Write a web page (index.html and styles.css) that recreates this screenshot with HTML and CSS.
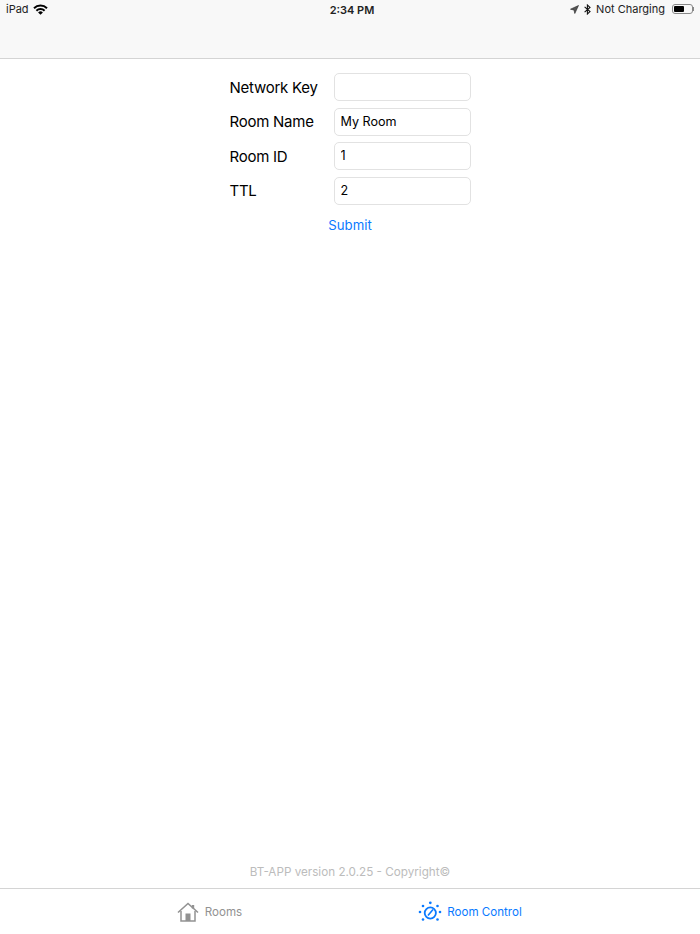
FILE: index.html
```html
<!DOCTYPE html>
<html lang="en">
<head>
  <meta charset="UTF-8">
  <title>Room Control</title>
  <link rel="stylesheet" href="styles.css">
</head>
<body>
  <div class="screen">
    <div class="topbar">
      <div class="status">
        <div class="status-left">
          <span>iPad</span>
          <svg class="wifi" width="15" height="11" viewBox="0 0 15 11">
            <path d="M0.3 3.6A10.2 10.2 0 0 1 14.7 3.6L13.3 5A8.2 8.2 0 0 0 1.7 5Z" fill="#000"/>
            <path d="M2.7 6A6.8 6.8 0 0 1 12.3 6L10.9 7.4A4.8 4.8 0 0 0 4.1 7.4Z" fill="#000"/>
            <path d="M5.1 8.4A3.4 3.4 0 0 1 9.9 8.4L7.5 10.8Z" fill="#000"/>
          </svg>
        </div>
        <div class="status-time">2:34 PM</div>
        <div class="status-right">
          <svg width="9" height="9" viewBox="0 0 9 9"><path d="M8.5 0.5L0.5 4.2L4 5L4.8 8.5Z" fill="#555" stroke="#222" stroke-width="0.6"/></svg>
          <svg class="bt" width="7" height="11" viewBox="0 0 7 11"><path d="M0.6 2.8L6 7.6L3.4 10V1L6 3.4L0.6 8.2" fill="none" stroke="#111" stroke-width="1.1"/></svg>
          <span>Not Charging</span>
          <div class="battery"><div class="battery-level"></div></div>
          <div class="battery-tip"></div>
        </div>
      </div>
    </div>

    <div class="main">
      <form class="room-form">
        <div class="form-row">
          <label>Network Key</label>
          <input type="text">
        </div>
        <div class="form-row">
          <label>Room Name</label>
          <input type="text" value="My Room">
        </div>
        <div class="form-row">
          <label>Room ID</label>
          <input type="text" value="1">
        </div>
        <div class="form-row">
          <label>TTL</label>
          <input type="text" value="2">
        </div>
        <button type="button" class="submit">Submit</button>
      </form>
      <div class="version">BT-APP version 2.0.25 - Copyright©</div>
    </div>

    <div class="tabbar">
      <a href="#" class="tab">
        <svg width="22" height="20" viewBox="0 0 22 20">
          <path d="M1 10.5L11 1.5L21 10.5" fill="none" stroke="#929292" stroke-width="1.6"/>
          <path d="M16 3V6.5" fill="none" stroke="#929292" stroke-width="2.4"/>
          <path d="M4 9V19H18V9" fill="none" stroke="#929292" stroke-width="1.5"/>
          <rect x="8.5" y="11.5" width="5" height="7.5" fill="#929292"/>
        </svg>
        <span>Rooms</span>
      </a>
      <a href="#" class="tab tab-control active">
        <svg width="24" height="22" viewBox="0 0 24 22">
          <circle cx="12.3" cy="12" r="5.6" fill="none" stroke="#0a7aff" stroke-width="1.8"/>
          <path d="M10 14.5L15 8.5" fill="none" stroke="#0a7aff" stroke-width="1.6"/>
          <g fill="#0a7aff">
            <circle cx="12.3" cy="1.8" r="1.4"/>
            <circle cx="5" cy="5" r="1.3"/>
            <circle cx="19.5" cy="5" r="1.3"/>
            <circle cx="2" cy="11" r="1.3"/>
            <circle cx="22" cy="11" r="1.3"/>
            <circle cx="5" cy="18.5" r="1.3"/>
            <circle cx="19.5" cy="18.5" r="1.3"/>
          </g>
        </svg>
        <span>Room Control</span>
      </a>
    </div>
  </div>
</body>
</html>
```

FILE: styles.css
```css
* { box-sizing: border-box; }
body {
  margin: 0;
  font-family: Inter, 'Liberation Sans', sans-serif;
  background-color: white;
  color: black;
}
.screen {
  display: flex;
  flex-direction: column;
  height: 934px;
}
.topbar {
  height: 59px;
  background-color: #f8f8f8;
  border-bottom: 1px solid #d4d4d4;
}
.status {
  display: flex;
  justify-content: space-between;
  align-items: center;
  height: 20px;
  padding: 0 6px 2px 6px;
  font-size: 11px;
  color: #222;
  position: relative;
}
.status-left,
.status-right {
  display: flex;
  align-items: center;
}
.status-left .wifi {
  margin-left: 4px;
}
.status-time {
  position: absolute;
  left: 4px;
  right: 0;
  top: 3px;
  text-align: center;
  font-weight: 600;
}
.status-right .bt {
  margin-left: 5px;
}
.status-right span {
  margin-left: 5px;
}
.battery {
  width: 21px;
  height: 10px;
  margin-left: 7px;
  padding: 1px;
  border: 1px solid #888;
  border-radius: 3px;
}
.battery-level {
  width: 10px;
  height: 100%;
  background-color: black;
  border-radius: 1px;
}
.battery-tip {
  width: 1px;
  height: 4px;
  background-color: #888;
}
.main {
  flex-grow: 1;
  display: flex;
  flex-direction: column;
  align-items: center;
  padding-top: 14px;
}
.room-form {
  display: flex;
  flex-direction: column;
  gap: 6.6px;
  width: 241px;
  flex-grow: 1;
}
.form-row {
  display: flex;
  align-items: center;
  justify-content: space-between;
}
label {
  font-size: 15px;
  letter-spacing: -0.25px;
}
input {
  width: 137px;
  height: 28px;
  padding: 0 6px 1px;
  border: 1px solid #e2e2e2;
  border-radius: 5px;
  font-family: inherit;
  font-size: 12.6px;
  color: black;
  outline: none;
}
.submit {
  align-self: center;
  margin-top: 3px;
  padding: 3px 0;
  background: none;
  border: none;
  font-family: inherit;
  font-size: 13.2px;
  color: #0a7aff;
  cursor: pointer;
}
.version {
  height: 23px;
  font-size: 11.7px;
  color: #bcbcbc;
}
.tabbar {
  display: grid;
  grid-template-columns: 261px 260px;
  padding-left: 79px;
  height: 46px;
  background-color: white;
  border-top: 1px solid #d4d4d4;
}
.tab {
  display: flex;
  align-items: center;
  justify-content: center;
  gap: 6px;
  font-size: 11.6px;
  color: #929292;
  text-decoration: none;
}
.tab.active {
  color: #0a7aff;
}
.tab-control {
  gap: 5px;
}
```
